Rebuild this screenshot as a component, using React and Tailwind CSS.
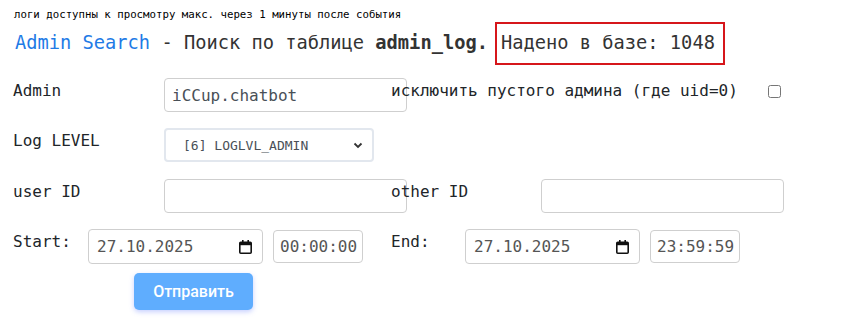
import React, { useState } from 'react';

// Поле даты: рисуем сами, чтобы формат не зависел от локали браузера
const DateBox = ({ value }) => (
  <div className="flex items-center justify-between w-[175px] h-[35px] border border-[#cfcfcf] rounded-[4px] pl-[8px] pr-[10px] text-[16px] text-[#555]">
    <span>{value}</span>
    <svg width="13" height="14" viewBox="0 0 13 14" className="text-[#111]">
      <rect x="3" y="0" width="1.6" height="3" fill="currentColor" />
      <rect x="8.4" y="0" width="1.6" height="3" fill="currentColor" />
      <rect x="0.8" y="2.2" width="11.4" height="11" rx="1" fill="none" stroke="currentColor" strokeWidth="1.6" />
      <rect x="0.8" y="2.2" width="11.4" height="3" fill="currentColor" />
    </svg>
  </div>
);

const TimeBox = ({ value }) => (
  <div className="flex items-center w-[90px] h-[33px] border border-[#cfcfcf] rounded-[4px] pl-[6px] text-[16px] text-[#555]">
    {value}
  </div>
);

const App = () => {
  const [admin, setAdmin] = useState('iCCup.chatbot');
  const [userId, setUserId] = useState('');
  const [otherId, setOtherId] = useState('');
  const [noEmpty, setNoEmpty] = useState(false);

  return (
    <div className="w-[841px] h-[329px] bg-white text-[#212529] font-['DejaVu_Sans_Mono','Liberation_Mono',monospace]">
      <h6 className="pl-[14px] pt-[8px] h-[22px] text-[10.72px] leading-[14px] font-normal text-[#000]">
        логи доступны к просмотру макс. через 1 минуты после события
      </h6>

      {/* Заголовок */}
      <h3 className="flex items-center h-[43px] pl-[15px] text-[18.72px] text-[#333]">
        <span className="text-[#1f7be6]">Admin Search</span>
        <span className="whitespace-pre"> - Поиск по таблице </span>
        <b className="font-bold">admin_log.</b>
        <span className="ml-[7px] flex items-center h-[43px] w-[230px] border-2 border-[#d6161b] pl-[4px]">
          Надено в базе: 1048
        </span>
      </h3>

      <form className="mt-[13px] pl-[13px] text-[16px] leading-[19px]" onSubmit={(e) => e.preventDefault()}>
        {/* Admin */}
        <div className="flex h-[33px]">
          <div className="w-[151px] pt-[3px]">Admin</div>
          <div className="w-[227px]">
            <input
              value={admin}
              onChange={(e) => setAdmin(e.target.value)}
              className="w-[243px] h-[34px] border border-[#cfcfcf] rounded-[4px] px-[7px] text-[#495057] outline-none"
            />
          </div>
          <div className="relative pt-[3px]">исключить пустого админа (где uid=0)</div>
          <input
            type="checkbox"
            checked={noEmpty}
            onChange={(e) => setNoEmpty(e.target.checked)}
            className="ml-[30px] mt-[7px] w-[13px] h-[13px]"
          />
        </div>

        {/* Log LEVEL */}
        <div className="flex h-[33px] mt-[17px]">
          <div className="w-[151px] pt-[3px]">Log LEVEL</div>
          <div className="relative">
            <select className="appearance-none w-[210px] h-[34px] border-2 border-[#e2e7ee] rounded-[4px] pl-[17px] text-[13px] text-[#495057] bg-white outline-none">
              <option>[6] LOGLVL_ADMIN</option>
            </select>
            <svg width="10" height="7" viewBox="0 0 10 7" className="absolute left-[189px] top-[14px] pointer-events-none">
              <path d="M1.5 1.5 L5 5 L8.5 1.5" fill="none" stroke="#333" strokeWidth="1.8" />
            </svg>
          </div>
        </div>

        {/* user ID / other ID */}
        <div className="flex h-[33px] mt-[18px]">
          <div className="w-[151px] pt-[3px]">user ID</div>
          <div className="w-[227px]">
            <input
              value={userId}
              onChange={(e) => setUserId(e.target.value)}
              className="w-[243px] h-[34px] border border-[#cfcfcf] rounded-[4px] px-[7px] text-[#495057] outline-none"
            />
          </div>
          <div className="relative w-[150px] pt-[3px]">other ID</div>
          <input
            value={otherId}
            onChange={(e) => setOtherId(e.target.value)}
            className="w-[243px] h-[34px] border border-[#cfcfcf] rounded-[4px] px-[7px] text-[#495057] outline-none"
          />
        </div>

        {/* Start / End */}
        <div className="flex items-start h-[35px] mt-[17px]">
          <div className="w-[75px] pt-[3px]">Start:</div>
          <DateBox value="27.10.2025" />
          <div className="ml-[10px] mt-[1px]"><TimeBox value="00:00:00" /></div>
          <div className="w-[74px] ml-[28px] pt-[3px]">End:</div>
          <DateBox value="27.10.2025" />
          <div className="ml-[10px] mt-[1px]"><TimeBox value="23:59:59" /></div>
        </div>

        <button
          type="submit"
          className="mt-[9px] ml-[121px] w-[119px] h-[37px] rounded-[5px] bg-[#5fadfe] text-white text-[16px] font-medium font-['Roboto',sans-serif] shadow-[0_2px_5px_rgba(95,120,255,0.35)]"
        >
          Отправить
        </button>
      </form>
    </div>
  );
};

export default App;
